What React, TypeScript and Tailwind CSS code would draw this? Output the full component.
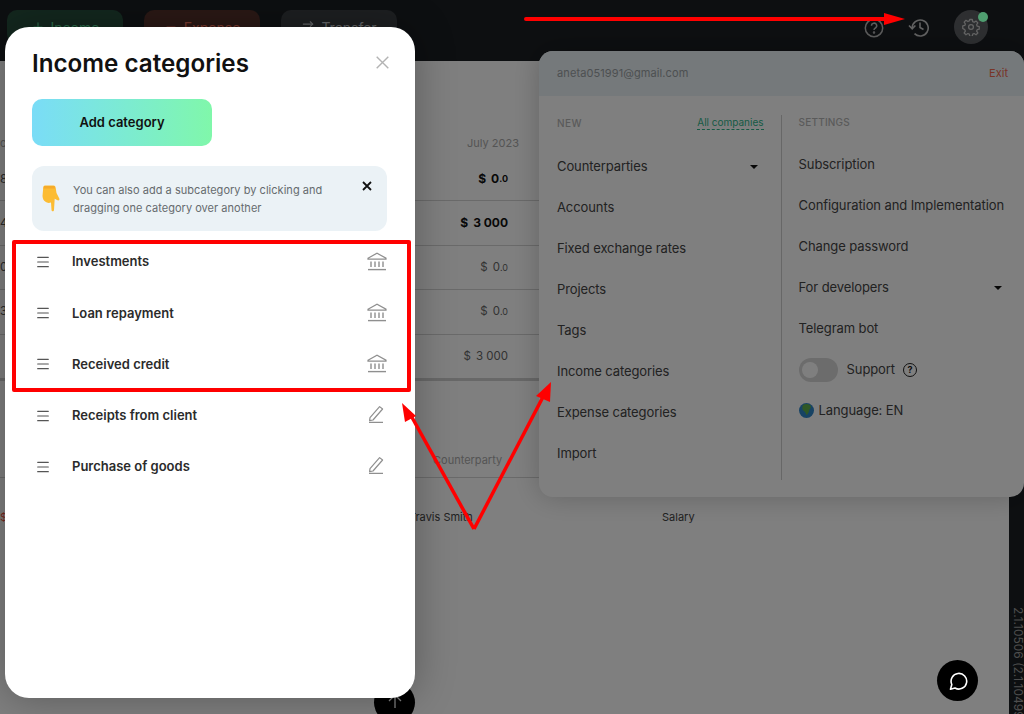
import React from "react";
import { ArrowRightLeft, Menu as MenuIcon, Minus, Plus } from "lucide-react";

const font = { fontFamily: '"Inter", "Noto Sans", sans-serif' };

const rows = [
  { edge: "8", value: "0", cents: ".0", bold: true },
  { edge: "4", value: "3 000", cents: "", bold: true },
  { edge: "0", value: "0", cents: ".0", bold: false },
  { edge: "3", value: "0", cents: ".0", bold: false },
  { edge: "", value: "3 000", cents: "", bold: false },
];

const newItems = [
  "Counterparties",
  "Accounts",
  "Fixed exchange rates",
  "Projects",
  "Tags",
  "Income categories",
  "Expense categories",
  "Import",
];

const categories = [
  { name: "Investments", system: true },
  { name: "Loan repayment", system: true },
  { name: "Received credit", system: true },
  { name: "Receipts from client", system: false },
  { name: "Purchase of goods", system: false },
];

const BankIcon = () => (
  <svg width="20" height="19" viewBox="0 0 20 19" fill="none" stroke="#8f8f8f" strokeWidth="1.2">
    <path d="M1 6.2 10 1.2l9 5v1H1z" />
    <path d="M4 9.5v5.5M8 9.5v5.5M12 9.5v5.5M16 9.5v5.5" strokeWidth="1.4" />
    <path d="M1 17.6h18" strokeWidth="1.4" />
  </svg>
);

const PencilIcon = () => (
  <svg width="16" height="18" viewBox="0 0 16 18" fill="none" stroke="#8f8f8f" strokeWidth="1.2">
    <path d="M2 12.6 11.6 1.6l3 2.4L5 15l-3.4.6z" strokeLinejoin="round" />
    <path d="M1 17.4h14" strokeWidth="1.3" />
  </svg>
);

const HandIcon = () => (
  <svg width="18" height="27" viewBox="0 0 18 27">
    <path
      d="M3 .5H11.500C13 .5 13.500 1.500 13.700 3L14.500 8L17.300 13.500C18 15.200 16.300 16 15 15L12.700 13.800L12 25C11.900 26.700 9.600 26.700 9.500 25L9 17.500C7 18.300 4.800 18 3.500 16.800C1.500 15.800 .7 13.500 .5 11L1.200 3C1.300 1.500 1.800 .5 3 .5z"
      fill="#fcbc33"
    />
    <path d="M2 1H12.500L13.200 3.500H1.400z" fill="#f4a425" opacity="0.7" />
  </svg>
);

const App = () => {
  return (
    <div className="relative w-[1024px] h-[714px] overflow-hidden bg-white" style={font}>
      {/* page under the dimmer */}
      <header className="h-[61px] bg-[#1b1f23] flex items-start">
        <div className="flex gap-[21px] pl-[7px] pt-[10px]">
          <div className="w-[116px] h-[34px] rounded-[10px] bg-[#264f3d] text-[#55d493] text-[14px] flex items-center justify-center gap-[6px]">
            <Plus size={14} />
            Income
          </div>
          <div className="w-[116px] h-[34px] rounded-[10px] bg-[#54302a] text-[#f0705a] text-[14px] flex items-center justify-center gap-[6px]">
            <Minus size={14} />
            Expense
          </div>
          <div className="w-[116px] h-[34px] rounded-[10px] bg-[#3a3e42] text-[#c4c8cc] text-[14px] flex items-center justify-center gap-[6px]">
            <ArrowRightLeft size={14} />
            Transfer
          </div>
        </div>
        <div className="ml-auto flex items-center pr-[36px] pt-[10px]">
          <svg width="20" height="20" viewBox="0 0 20 20" fill="none" stroke="#b9b9b9" strokeWidth="1.5" className="mr-[24px] mt-[1px]">
            <circle cx="10" cy="10" r="8.700" />
            <path d="M7.500 7.800a2.600 2.600 0 1 1 3.900 2.200c-.9.5-1.400 1-1.400 2" />
            <circle cx="10" cy="14.500" r="0.500" />
          </svg>
          <svg width="22" height="20" viewBox="0 0 22 20" fill="none" stroke="#c4c4c4" strokeWidth="1.600" className="mr-[24px]">
            <path d="M4.200 11a8 8 0 1 1 2.300 5.600" />
            <path d="M1 8.500 4.200 11.800 7.400 8.500" />
            <path d="M12 5.500V10.500l3.500 2" />
          </svg>
          <div className="relative w-[34px] h-[34px] rounded-full bg-[#5c5f63] flex items-center justify-center">
            <svg width="18" height="18" viewBox="0 0 24 24" fill="none" stroke="#c9c9c9" strokeWidth="1.700" strokeLinejoin="round">
              <path d="M10.300 2h3.400l.6 2.900 1.900.8 2.500-1.600 2.400 2.400-1.600 2.500.8 1.900 2.700.6v3.400l-2.700.6-.8 1.900 1.600 2.500-2.400 2.400-2.500-1.600-1.900.8-.6 2.900h-3.400l-.6-2.900-1.900-.8-2.500 1.600-2.400-2.400 1.600-2.500-.8-1.900L1 13.900v-3.400l2.700-.6.8-1.900-1.600-2.500 2.400-2.400 2.500 1.600 1.900-.8z" />
              <circle cx="12" cy="12" r="3.200" />
            </svg>
            <span className="absolute z-10 right-0 top-[2px] w-[10px] h-[10px] rounded-full bg-[#4f9e70]" />
          </div>
        </div>
      </header>

      <div className="flex h-[653px]">
        <main className="flex-1 min-w-0 text-[#222] text-[11px]">
          <div className="pt-[74px] w-[540px]">
            <div className="flex justify-between pr-[21px] text-[#aaa] text-[11px] leading-[16px] pb-[6px]">
              <span className="w-[5px] overflow-hidden">c</span>
              July 2023
            </div>
            {rows.map((row, i) => (
              <div
                key={i}
                className={`h-[44.400px] flex items-center justify-end pr-[32px] border-b border-[#d4d4d4] ${
                  row.bold ? "font-bold text-[#111] text-[12px]" : "text-[#666] text-[11.500px]"
                }`}
              >
                <span className="w-[5px] mr-auto overflow-hidden font-normal text-[#555]">{row.edge}</span>
                <span className="mr-[5px]">$</span>
                {row.value}
                <span className="text-[9px]">{row.cents}</span>
              </div>
            ))}
            <div className="h-[3px] bg-[#d0d0d0] -mt-[1px]" />
          </div>
          <div className="flex border-b border-[#d4d4d4] h-[97px] w-[540px] items-end pb-[8px] pl-[433px] text-[#aaa]">
            Counterparty
          </div>
          <div className="flex pt-[31px] text-[#444] leading-[16px]">
            <span className="w-[5px] overflow-hidden text-[#f0503a]">$</span>
            <span className="w-[253px] ml-[404px]">Travis Smith</span>
            <span>Salary</span>
          </div>
        </main>
        <aside className="relative w-[15px] bg-[#1b1f23]">
          <span className="absolute left-[3px] top-[546px] text-[12px] leading-[13px] text-[#9a9a9a] whitespace-nowrap [writing-mode:vertical-rl]">
            2.1.10506 (2.1.10499)
          </span>
        </aside>
      </div>

      {/* settings menu */}
      <div className="absolute left-[539px] top-[51px] w-[485px] h-[446px] bg-white rounded-[14px] overflow-hidden shadow-[0_0_28px_rgba(0,0,0,0.22)]">
        <div className="h-[45px] bg-[#ebf2f6] flex items-center justify-between pl-[18px] pr-[16px] text-[11px]">
          <span className="text-[#9aa1a4] tracking-[0.1px]">aneta051991@gmail.com</span>
          <span className="text-[#f06a4f]">Exit</span>
        </div>
        <div className="flex h-[384px] pt-[19px]">
          <div className="w-[243px] border-r border-[#cfcfcf] pl-[18px] pr-[17px]">
            <div className="flex justify-between items-center h-[16px] text-[10px]">
              <span className="text-[#b5b5b5] font-medium tracking-[0.4px]">NEW</span>
              <span className="text-[#2fb58a] border-b border-dashed border-[#2fb58a] leading-[13px]">All companies</span>
            </div>
            <ul className="pt-[15px] text-[13px] text-[#444] tracking-[-0.1px]">
              {newItems.map((item, i) => (
                <li key={item} className="h-[41px] flex items-center justify-between">
                  {item}
                  {i === 0 && <span className="w-0 h-0 mr-[6px] border-x-[4px] border-x-transparent border-t-[4px] border-t-[#111]" />}
                </li>
              ))}
            </ul>
          </div>
          <div className="flex-1 pl-[17px] pr-[20px]">
            <div className="h-[16px] flex items-center text-[10px] text-[#b5b5b5] font-medium tracking-[0.2px] -mt-[1px]">SETTINGS</div>
            <ul className="pt-[14px] text-[13px] text-[#444] tracking-[-0.1px]">
              <li className="h-[41px] flex items-center">Subscription</li>
              <li className="h-[41px] flex items-center whitespace-nowrap">Configuration and Implementation</li>
              <li className="h-[41px] flex items-center">Change password</li>
              <li className="h-[41px] flex items-center justify-between">
                For developers
                <span className="w-0 h-0 mr-[2px] border-x-[4px] border-x-transparent border-t-[4px] border-t-[#111]" />
              </li>
              <li className="h-[41px] flex items-center">Telegram bot</li>
              <li className="h-[41px] flex items-center">
                <span className="w-[39px] h-[24px] rounded-full bg-[#d8d8d8] flex items-center pl-[3px] mr-[9px]">
                  <span className="w-[16px] h-[16px] rounded-full bg-white" />
                </span>
                Support
                <span className="ml-[8px] w-[14px] h-[14px] rounded-full border-[1.500px] border-[#222] text-[9px] font-bold leading-none flex items-center justify-center text-[#222]">?</span>
              </li>
              <li className="h-[41px] flex items-center">
                <svg width="15" height="15" viewBox="0 0 15 15" className="mr-[5px]">
                  <circle cx="7.500" cy="7.500" r="7.500" fill="#2f86c9" />
                  <path d="M4 2c2-1.200 5-1.200 7 0 1.500 1.500 1 3-.5 4.200-.3 2-1.200 4.500-3 6-.5-2-1.500-3.500-3-4.500C3 6.500 3 4 4 2z" fill="#5fb04a" />
                </svg>
                Language: EN
              </li>
            </ul>
          </div>
        </div>
      </div>

      {/* scroll-up button sits under the dimmer */}
      <div className="absolute left-[374px] top-[682px] w-[41px] h-[41px] rounded-full bg-black flex items-center justify-center">
        <svg width="16" height="16" viewBox="0 0 16 16" fill="none" stroke="#fff" strokeWidth="1.300" className="-mt-[3px]">
          <path d="M8 15V2M2 8l6-6 6 6" />
        </svg>
      </div>

      {/* dimmer */}
      <div className="absolute inset-0 bg-black/50" />

      <button className="absolute left-[937px] top-[660px] w-[41px] h-[41px] rounded-full bg-black flex items-center justify-center">
        <svg width="20" height="20" viewBox="0 0 20 20" fill="none" stroke="#fff" strokeWidth="1.600" strokeLinejoin="round">
          <path d="M2.500 18.200 3.800 13.500A7.800 7.800 0 1 1 7 17z" />
        </svg>
      </button>

      {/* modal */}
      <div className="absolute left-[5px] top-[27px] w-[410px] h-[671px] bg-white rounded-[24px] shadow-[0_0_40px_rgba(0,0,0,0.3)] pl-[27px] pr-[28px] pt-[20px]">
        <div className="flex items-center justify-between h-[32px]">
          <h1 className="mt-[2px] text-[24.200px] font-semibold text-[#111] leading-none">Income categories</h1>
          <svg width="13" height="13" viewBox="0 0 13 13" stroke="#b3b3b3" strokeWidth="1.400" className="mr-[-2px] -mt-[2px]">
            <path d="M.7.700l11.600 11.600M12.300.700.700 12.300" />
          </svg>
        </div>
        <button className="mt-[20px] block w-[180px] h-[47px] rounded-[10px] bg-gradient-to-r from-[#7adcf7] to-[#80f7aa] text-[13px] font-semibold text-[#111]">
          Add category
        </button>
        <div className="relative mt-[20px] h-[65px] rounded-[12px] bg-[#ebf2f6] flex items-center pl-[10px]">
          <HandIcon />
          <p className="ml-[13px] mt-[2px] text-[11px] leading-[17.500px] text-[#666b6e] tracking-[0.03px] whitespace-nowrap">
            You can also add a subcategory by clicking and
            <br />
            dragging one category over another
          </p>
          <svg width="10" height="10" viewBox="0 0 10 10" stroke="#111" strokeWidth="1.800" className="absolute right-[15px] top-[15px]">
            <path d="M1 1l8 8M9 1 1 9" />
          </svg>
        </div>
        <ul className="mt-[5px]">
          {categories.map((cat) => (
            <li key={cat.name} className="h-[51.200px] flex items-center pt-[1px]">
              <MenuIcon size={16} strokeWidth={1.700} color="#555" className="ml-[3px]" />
              <span className="ml-[21px] text-[13px] font-semibold text-[#2b2b2b]">{cat.name}</span>
              <span className={`ml-auto flex ${cat.system ? "mr-0 -mt-[1px]" : "mr-[3px] -mt-[4px]"}`}>
                {cat.system ? <BankIcon /> : <PencilIcon />}
              </span>
            </li>
          ))}
        </ul>
      </div>

      {/* annotations */}
      <div className="absolute left-[12px] top-[240px] w-[399px] h-[152px] border-[4px] border-[#ff0000] rounded-[2px]" />
      <svg width="1024" height="714" viewBox="0 0 1024 714" className="absolute inset-0 pointer-events-none">
        <line x1="526" y1="19" x2="890" y2="19" stroke="#f00" strokeWidth="4" strokeLinecap="round" />
        <polygon points="884,13 905,19 884,25" fill="#f00" />
        <path d="M474 529 409 412" stroke="#f00" strokeWidth="3.500" fill="none" />
        <polygon points="402,403 416,416 405,422" fill="#f00" />
        <path d="M474 529 544 395" stroke="#f00" strokeWidth="3.500" fill="none" />
        <polygon points="551,382 550,402 536,396" fill="#f00" />
      </svg>
    </div>
  );
};

export default App;
